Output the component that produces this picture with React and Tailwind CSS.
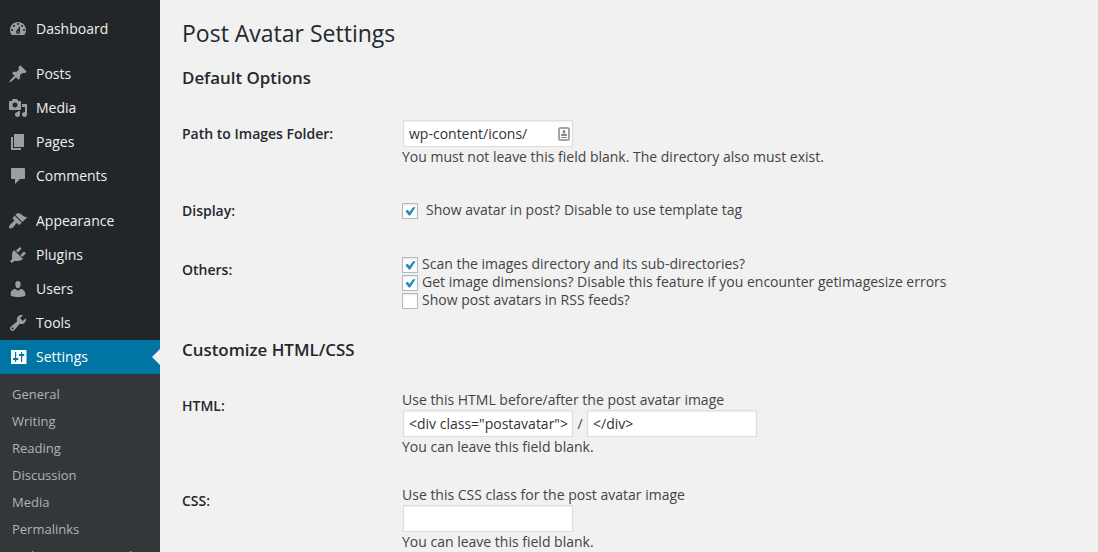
const ICONS = {
  dashboard:
    "M3.76 16h12.48c1.1-1.37 1.76-3.11 1.76-5 0-4.42-3.58-8-8-8s-8 3.58-8 8c0 1.89.66 3.63 1.76 5zM10 4c.55 0 1 .45 1 1s-.45 1-1 1-1-.45-1-1 .45-1 1-1zM6 6c.55 0 1 .45 1 1s-.45 1-1 1-1-.45-1-1 .45-1 1-1zm8 0c.55 0 1 .45 1 1s-.45 1-1 1-1-.45-1-1 .45-1 1-1zm-5.37 5.55L12 7v6c0 1.1-.9 2-2 2s-2-.9-2-2c0-.57.24-1.08.63-1.45zM4 10c.55 0 1 .45 1 1s-.45 1-1 1-1-.45-1-1 .45-1 1-1zm12 0c.55 0 1 .45 1 1s-.45 1-1 1-1-.45-1-1 .45-1 1-1zm-6 2.2a.8.8 0 1 0 0 1.6.8.8 0 0 0 0-1.6z",
  posts:
    "M10.44 3.02l1.82-1.82 6.36 6.35-1.83 1.82c-1.05-.68-2.48-.57-3.41.36l-.75.75c-.92.93-1.04 2.35-.35 3.41l-1.83 1.82-2.41-2.41-2.8 2.79c-.42.42-3.38 2.71-3.8 2.29s1.86-3.39 2.28-3.81l2.79-2.79L4.1 9.36l1.83-1.82c1.05.69 2.48.57 3.4-.36l.75-.75c.93-.92 1.05-2.35.36-3.41z",
  media:
    "M13 11V4c0-.55-.45-1-1-1h-1.67L9 1H5L3.67 3H2c-.55 0-1 .45-1 1v7c0 .55.45 1 1 1h10c.55 0 1-.45 1-1zM7 4.5c1.38 0 2.5 1.12 2.5 2.5S8.38 9.5 7 9.5 4.5 8.38 4.5 7 5.62 4.5 7 4.5zM14 6h5v10.5c0 1.38-1.12 2.5-2.5 2.5S14 17.88 14 16.5s1.12-2.5 2.5-2.5c.17 0 .34.02.5.05V9h-3V6zm-4 8.05V13h2v3.5c0 1.38-1.12 2.5-2.5 2.5S7 17.88 7 16.5 8.12 14 9.5 14c.17 0 .34.02.5.05z",
  pages: "M6 15V2h10v13H6zm-1 1h8v2H3V5h2v11z",
  comments:
    "M4 2h12q1 0 1 1v9q0 1-1 1h-4l-5 5v-5H4q-1 0-1-1V3q0-1 1-1z",
  appearance:
    "M14.48 11.06L7.41 3.99l1.5-1.5c.5-.56 2.3-.47 3.51.32 1.21.8 1.43 1.28 2.91 2.1 1.18.64 2.45 1.26 4.45.85zm-.71.71L6.7 4.7 4.93 6.47c-.39.39-.39 1.02 0 1.41l1.06 1.06c.39.39.39 1.03 0 1.42-.6.6-1.43 1.11-2.21 1.69-.35.26-.7.53-1.01.84C1.43 14.23.4 16.08 1.4 17.07c.99 1 2.84-.03 4.18-1.36.31-.31.58-.66.85-1.02.57-.78 1.08-1.61 1.69-2.21.39-.39 1.02-.39 1.41 0l1.06 1.06c.39.39 1.02.39 1.41 0z",
  plugins:
    "M13.11 4.36L9.87 7.6 8 5.73l3.24-3.24c.35-.34 1.05-.2 1.56.32.52.51.66 1.21.31 1.55zm-8 1.77l.91-1.12 9.01 9.01-1.19.84c-.71.71-2.63 1.16-3.82 1.16H6.14L4.9 17.26c-.59.59-1.54.59-2.12 0-.59-.58-.59-1.53 0-2.12l1.24-1.24v-3.88c0-1.13.4-3.19 1.09-3.89zm7.26 3.97l3.24-3.24c.34-.35 1.04-.21 1.55.31.52.51.66 1.21.31 1.55l-3.24 3.25z",
  users:
    "M10 9.25c-2.27 0-2.73-3.44-2.73-3.44C7 4.02 7.82 2 9.97 2c2.16 0 2.98 2.02 2.71 3.81 0 0-.41 3.44-2.68 3.44zm0 2.57L12.72 10c2.39 0 4.52 2.33 4.52 4.53v2.49s-3.65 1.13-7.24 1.13c-3.65 0-7.24-1.13-7.24-1.13v-2.49c0-2.25 1.94-4.48 4.47-4.48z",
  tools:
    "M16.68 9.77c-1.34 1.34-3.3 1.67-4.95.99l-5.41 6.52c-.99.99-2.59.99-3.58 0s-.99-2.59 0-3.57l6.52-5.42c-.68-1.65-.35-3.61.99-4.95 1.28-1.28 3.12-1.62 4.72-1.06l-2.89 2.89 2.82 2.82 2.86-2.87c.53 1.58.18 3.39-1.08 4.65zM3.81 16.21c.4.39 1.04.39 1.43 0 .4-.4.4-1.04 0-1.43-.39-.4-1.03-.4-1.43 0-.39.39-.39 1.03 0 1.43z",
  settings:
    "M3.500 3h14.500q.5 0 .5.5v13q0 .5-.5.5h-14.500q-.5 0-.5-.5v-13q0-.5.5-.5zM7 5v6H5v2h2v2h1.200v-2h2v-2h-2V5zM13 5v2h-2v2h2v6h1.200V9h2V7h-2V5z",
};

function Icon({ name }) {
  return (
    <svg viewBox="0 0 20 20" className="ml-2 mr-2 h-5 w-5 shrink-0" fill="currentColor" fillRule="evenodd">
      <path d={ICONS[name]} />
    </svg>
  );
}

function MenuItem({ name, label, active }) {
  return (
    <li
      className={
        active
          ? "relative flex h-[34px] items-center bg-[#0074a2] text-white"
          : "flex h-[34px] items-center text-[#999ea2]"
      }
    >
      <Icon name={name} />
      <span className={active ? "text-[14px] leading-[18px] text-white" : "text-[14px] leading-[18px] text-[#eee]"}>
        {label}
      </span>
      {active && (
        <span className="absolute right-0 top-[9px] h-0 w-0 border-y-8 border-r-8 border-y-transparent border-r-[#f1f1f1]" />
      )}
    </li>
  );
}

function Sidebar() {
  return (
    <nav className="h-[552px] w-40 shrink-0 overflow-hidden bg-[#222629] pt-3">
      <ul>
        <MenuItem name="dashboard" label="Dashboard" />
        <li className="h-[11px]" />
        <MenuItem name="posts" label="Posts" />
        <MenuItem name="media" label="Media" />
        <MenuItem name="pages" label="Pages" />
        <MenuItem name="comments" label="Comments" />
        <li className="h-[11px]" />
        <MenuItem name="appearance" label="Appearance" />
        <MenuItem name="plugins" label="Plugins" />
        <MenuItem name="users" label="Users" />
        <MenuItem name="tools" label="Tools" />
        <MenuItem name="settings" label="Settings" active />
      </ul>
      <ul className="bg-[#33373a] pt-[7px] text-[13px] leading-[27px] text-[#b0b3b5]">
        {["General", "Writing", "Reading", "Discussion", "Media", "Permalinks", "Make Custom Panel"].map((t, i) => (
          <li key={i} className="h-[27px] whitespace-nowrap px-3">
            {t}
          </li>
        ))}
      </ul>
    </nav>
  );
}

function Field({ children }) {
  return (
    <div className="mx-px flex h-[27px] w-[170px] items-center border border-[#ddd] bg-white px-[5px] text-[14px] whitespace-nowrap text-[#333] shadow-[inset_0_1px_2px_rgba(0,0,0,0.07)]">
      {children}
    </div>
  );
}

function Check({ checked, label, gap }) {
  return (
    <div className="flex h-[18px] items-center">
      <span className="mt-px flex h-4 w-4 shrink-0 items-center justify-center border border-[#b4b9be] bg-white shadow-[inset_0_1px_2px_rgba(0,0,0,0.1)]">
        {checked && (
          <svg viewBox="0 0 14 14" className="h-3.5 w-3.5" fill="#1e8cbe">
            <path d="M2.300 7L4.800 5.700L6.500 8L10 3.200H12.600L7.200 11.400H5.800z" />
          </svg>
        )}
      </span>
      <span className={gap ? "ml-2" : "ml-1"}>{label}</span>
    </div>
  );
}

function Row({ label, className, labelClass = "pt-[5px]", children }) {
  return (
    <div className={"flex " + className}>
      <div className={"w-[220px] shrink-0 font-semibold text-[#23282d] " + labelClass}>{label}</div>
      <div>{children}</div>
    </div>
  );
}

export default function App() {
  return (
    <div className="flex h-[552px] w-[1098px] overflow-hidden bg-[#f1f1f1] font-['Open_Sans',sans-serif]">
      <Sidebar />
      <main className="flex-1 pl-[22px] text-[14px] leading-[18px] text-[#444]">
        <h1 className="mt-[19px] text-[23px] leading-[29px] text-[#23282d]">Post Avatar Settings</h1>
        <h3 className="mt-[18px] h-6 text-[16.9px] leading-6 font-semibold text-[#23282d]">Default Options</h3>
        <Row label="Path to Images Folder:" className="mt-[30px] h-[81px]">
          <Field>
            <span className="flex-1">wp-content/icons/</span>
            <svg viewBox="0 0 12 14" className="-mr-[3px] h-3.5 w-3" fill="none">
              <rect x="1" y="1" width="10" height="12" rx="1" stroke="#888" strokeWidth="1.500" />
              <path d="M6 3a1.500 1.500 0 1 1 0 3a1.500 1.500 0 0 1 0-3zM3 9V7.500l2-1h2l2 1V9zM3 10h6v1H3z" fill="#888" />
            </svg>
          </Field>
          <p className="mt-px">You must not leave this field blank. The directory also must exist.</p>
        </Row>
        <Row label="Display:" className="h-[54px]" labelClass="pt-px">
          <Check checked gap label="Show avatar in post? Disable to use template tag" />
        </Row>
        <Row label="Others:" className="h-[83px]" labelClass="pt-1.5">
          <Check checked label="Scan the images directory and its sub-directories?" />
          <Check checked label="Get image dimensions? Disable this feature if you encounter getimagesize errors" />
          <Check label="Show post avatars in RSS feeds?" />
        </Row>
        <h3 className="h-6 text-[16.9px] leading-6 font-semibold text-[#23282d]">Customize HTML/CSS</h3>
        <Row label="HTML:" className="mt-[29px] h-[95px]" labelClass="pt-1.5">
          <p className="mb-px">Use this HTML before/after the post avatar image</p>
          <div className="flex items-center">
            <Field>{'<div class="postavatar">'}</Field>
            <span className="w-3 text-center">/</span>
            <Field>{"</div>"}</Field>
          </div>
          <p className="mt-px">You can leave this field blank.</p>
        </Row>
        <Row label="CSS:" className="h-[66px]" labelClass="pt-1.5">
          <p className="mb-px">Use this CSS class for the post avatar image</p>
          <Field />
          <p className="mt-px">You can leave this field blank.</p>
        </Row>
      </main>
    </div>
  );
}
